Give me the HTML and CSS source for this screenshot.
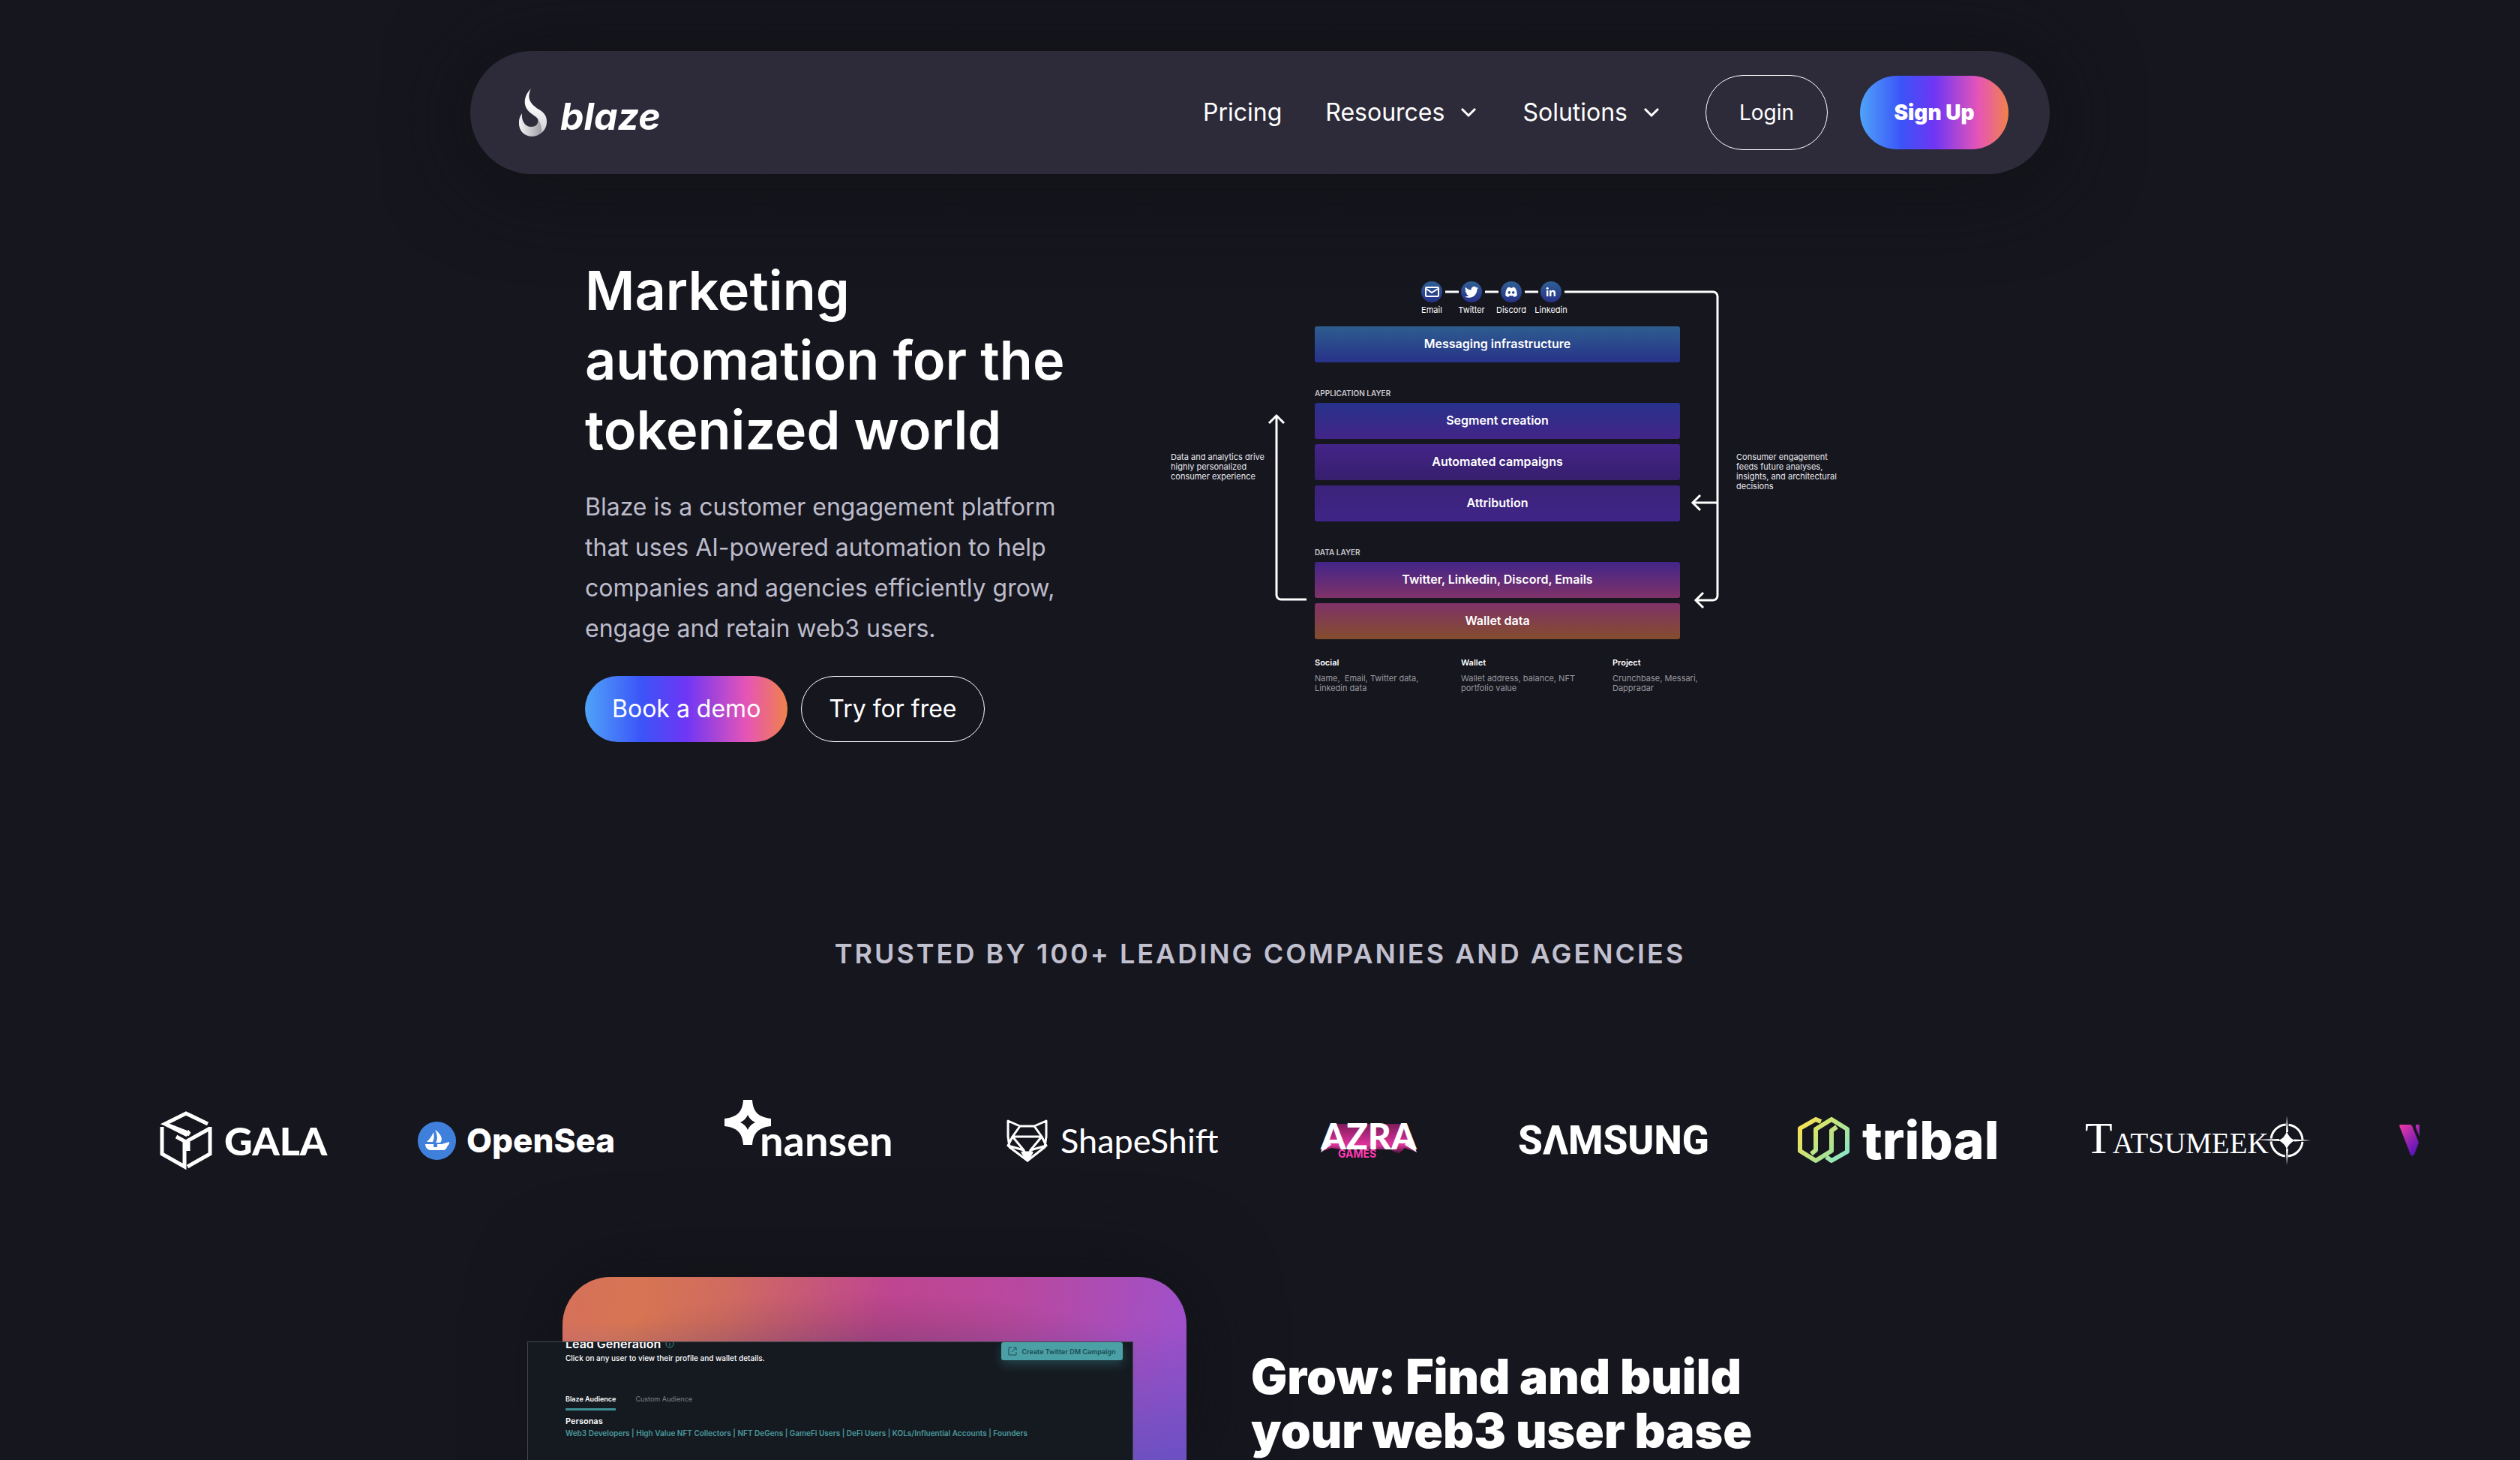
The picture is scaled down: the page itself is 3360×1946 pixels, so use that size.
FILE: index.html
```html
<!DOCTYPE html>
<html lang="en">
<head>
<meta charset="utf-8">
<meta name="viewport" content="width=device-width, initial-scale=1">
<title>Blaze – Marketing automation for the tokenized world</title>
<link rel="stylesheet" href="styles.css">
</head>
<body>
<header class="header">
  <a class="brand" href="#" aria-label="Blaze home">
    <svg class="brand-mark" viewBox="0 0 37 64" aria-hidden="true">
      <defs>
        <linearGradient id="flame" x1="0" y1="0" x2="0" y2="1"><stop offset="0.4" stop-color="#fafafa"/><stop offset="1" stop-color="#cfced4"/></linearGradient>
        <linearGradient id="bowl" x1="0" y1="0" x2="1" y2="0"><stop offset="0" stop-color="#f4f4f6"/><stop offset="1" stop-color="#9b9aa3"/></linearGradient>
      </defs>
      <path fill="url(#bowl)" d="M4 33C-2 41-1 52 4 58C10 65 23 66 30 59L31 50L25 42C26 47 23 51 16 51C8 51 3 43 4 33Z"/>
      <path fill="url(#flame)" d="M16 0C6 10 6 21 11 28C16 35 25 37 26 43C29 47 31 52 30 59C35 55 37 50 37 44C37 35 32 31 25 27C15 20 10 13 16 0Z"/>
    </svg>
    <span class="brand-name">blaze</span>
  </a>
  <nav class="nav" aria-label="Main">
    <a class="nav-link" href="#">Pricing</a>
    <a class="nav-link" href="#">Resources
      <svg class="chevron" viewBox="0 0 24 16" aria-hidden="true"><path d="M3 3l9 9 9-9"/></svg></a>
    <a class="nav-link" href="#">Solutions
      <svg class="chevron" viewBox="0 0 24 16" aria-hidden="true"><path d="M3 3l9 9 9-9"/></svg></a>
    <button class="login" type="button">Login</button>
    <button class="signup gradient" type="button">Sign Up</button>
  </nav>
</header>

<main>
  <section class="hero">
    <div class="hero-copy">
      <h1>Marketing automation for the tokenized world</h1>
      <p class="lead">Blaze is a customer engagement platform that uses AI-powered automation to help companies and agencies efficiently grow, engage and retain web3 users.</p>
      <div class="actions">
        <button class="cta gradient" type="button">Book a demo</button>
        <button class="cta outline" type="button">Try for free</button>
      </div>
    </div>

    <figure class="diagram">
      <svg class="wires" viewBox="0 0 900 580" aria-hidden="true">
        <path d="M377 39h18M430 39h18M483 39h18M536 39h198a6 6 0 0 1 6 6V444a6 6 0 0 1-6 6H711M740 320H707"/>
        <path d="M721 440l-10 10 10 10M717 310l-10 10 10 10"/>
        <path d="M192 449H158a6 6 0 0 1-6-6V204M142 214l10-10 10 10"/>
      </svg>
      <p class="note note-left">Data and analytics drive highly personalized consumer experience</p>
      <div class="stack">
        <ul class="channels">
          <li><svg viewBox="0 0 28 28" aria-hidden="true"><defs><linearGradient id="disc" x1="0" y1="0" x2="0" y2="1"><stop offset="0" stop-color="#2f5f94"/><stop offset="1" stop-color="#273289"/></linearGradient></defs><circle cx="14" cy="14" r="14" fill="url(#disc)"/><rect x="6" y="8" width="17" height="12" rx="1" fill="none" stroke="#fff" stroke-width="2"/><path d="M7 10l7 5 8-5" fill="none" stroke="#fff" stroke-width="2"/></svg>Email</li>
          <li><svg viewBox="0 0 28 28" aria-hidden="true"><circle cx="14" cy="14" r="14" fill="url(#disc)"/><path fill="#fff" transform="translate(5 5) scale(.76)" d="M23.6 4.9c-.9.4-1.8.7-2.8.8 1-.6 1.8-1.6 2.2-2.7-1 .6-2 1-3.1 1.2A4.9 4.9 0 0 0 11.5 8.7C7.5 8.5 3.9 6.5 1.5 3.6c-1.300 2.200-.7 5.100 1.500 6.600-.8 0-1.600-.2-2.200-.6 0 2.300 1.600 4.400 3.900 4.900-.7.2-1.500.2-2.200.1.6 2 2.400 3.400 4.600 3.400A9.900 9.900 0 0 1 0 20a13.900 13.900 0 0 0 7.500 2.200c9.100 0 14.300-7.700 14-14.600 1-.7 1.800-1.600 2.100-2.700z"/></svg>Twitter</li>
          <li><svg viewBox="0 0 28 28" aria-hidden="true"><circle cx="14" cy="14" r="14" fill="url(#disc)"/><path fill="#fff" fill-rule="evenodd" d="M9 8.500l3-1 .7 1.200h2.600L16 7.500l3 1c2 3 3 6 2.700 10.500-1.200 1-2.500 1.600-4 2l-1-1.700h-5.400l-1 1.700c-1.500-.4-2.800-1-4-2C6 14.500 7 11.500 9 8.500zM11.300 13a1.700 1.900 0 1 0 .01 0zM16.700 13a1.700 1.900 0 1 0 .01 0z"/></svg>Discord</li>
          <li><svg viewBox="0 0 28 28" aria-hidden="true"><circle cx="14" cy="14" r="14" fill="url(#disc)"/><path fill="#fff" d="M8 12h2.400v8H8zM12 12h2.300v1.200c1.400-2.200 5.700-1.800 5.700 1.800v5h-2.400v-4.500c0-2.200-3.100-2-3.100 0V20H12z"/><circle cx="9.200" cy="9.200" r="1.500" fill="#fff"/></svg>Linkedin</li>
        </ul>
        <div class="bar bar-messaging">Messaging infrastructure</div>
        <h2 class="layer">APPLICATION LAYER</h2>
        <div class="bars">
          <div class="bar bar-segment">Segment creation</div>
          <div class="bar bar-campaigns">Automated campaigns</div>
          <div class="bar bar-attribution">Attribution</div>
        </div>
        <h2 class="layer">DATA LAYER</h2>
        <div class="bars">
          <div class="bar bar-social">Twitter, Linkedin, Discord, Emails</div>
          <div class="bar bar-wallet">Wallet data</div>
        </div>
        <dl class="sources">
          <div><dt>Social</dt><dd>Name,&nbsp; Email, Twitter data,<br>Linkedin data</dd></div>
          <div><dt>Wallet</dt><dd>Wallet address, balance, NFT<br>portfolio value</dd></div>
          <div><dt>Project</dt><dd>Crunchbase, Messari,<br>Dappradar</dd></div>
        </dl>
      </div>
      <p class="note note-right">Consumer engagement feeds future analyses, insights, and architectural decisions</p>
    </figure>
  </section>

  <section class="trusted">
    <h2 class="trusted-title">TRUSTED BY 100+ LEADING COMPANIES AND AGENCIES</h2>
    <ul class="logos">
      <li class="logo gala">
        <svg width="70" height="78" viewBox="0 0 70 78" fill="none" stroke="#fff" stroke-width="5" aria-hidden="true"><path d="M40 31L35 28 7 17 35 3 64 17M40 27L35 31 7 17M3 21v36l30 17V40L22 34M67 21v36L37 74M67 23L38 39v14"/></svg>
        <span>GALA</span></li>
      <li class="logo opensea">
        <svg width="51" height="51" viewBox="0 0 51 51" aria-hidden="true"><circle cx="25.500" cy="25.500" r="25.500" fill="#3f80dc"/><path fill="#fff" d="M23 11l3 2c5 5 8 10 4 15h-6c3-5 2-11-1-17zM21 14c1 5 1 9-1 13h-8c4-4 7-8 9-13zM10 30h11v4h5v-4h6l10-3v3c-3 1-3 8-8 8H17c-4 0-7-4-7-8z"/></svg>
        <span>OpenSea</span></li>
      <li class="logo nansen">
        <svg width="62" height="60" viewBox="0 0 62 60" aria-hidden="true"><path fill="#fff" fill-rule="evenodd" d="M25 0H37C38 15 44 23 62 25V35C44 37 38 45 37 60H25C24 45 18 37 0 35V25C18 23 24 15 25 0ZM31 20Q28 27 21 30Q28 33 31 40Q34 33 41 30Q34 27 31 20Z"/></svg>
        <span>nansen</span></li>
      <li class="logo shapeshift">
        <svg width="55" height="59" viewBox="0 0 55 59" fill="none" stroke="#fff" stroke-width="3" stroke-linejoin="round" aria-hidden="true"><path d="M2 3L18 10H37L53 3V24L51 38 28 56 4 38 2 24ZM18 10L8 24H47L37 10M8 24L2 36 23 42 8 24M47 24L53 36 32 42 47 24M23 42L28 56 32 42"/><path fill="#fff" d="M21 45h13l-6 11z"/></svg>
        <span>ShapeShift</span></li>
      <li class="logo azra">
        <svg class="azra-glow" width="128" height="46" viewBox="0 0 128 46" aria-hidden="true"><defs><linearGradient id="glow" x1="0" y1="0" x2="0" y2="1"><stop offset="0" stop-color="#7d1c5c"/><stop offset="0.700" stop-color="#e0329c"/><stop offset="1" stop-color="#3c1332"/></linearGradient></defs><path fill="url(#glow)" d="M14 2H112L128 40 112 34 104 42 92 36H26L14 34 0 40Z"/><path fill="#f4eef3" d="M0 40L8 18 14 30ZM128 40L120 18 112 30Z"/></svg>
        <span class="azra-name">AZRA</span><span class="azra-sub">GAMES</span></li>
      <li class="logo samsung"><span>SΛMSUNG</span></li>
      <li class="logo tribal">
        <svg width="69" height="62" viewBox="0 0 69 62" fill="none" stroke-width="6" stroke-linejoin="round" aria-hidden="true"><defs><linearGradient id="leafA" x1="0" y1="0" x2="1" y2="1"><stop offset="0" stop-color="#ffe24d"/><stop offset="1" stop-color="#93e2a3"/></linearGradient><linearGradient id="leafB" x1="0" y1="0" x2="1" y2="1"><stop offset="0" stop-color="#e6e552"/><stop offset="1" stop-color="#83e5cd"/></linearGradient></defs><path stroke="url(#leafA)" d="M31 6L24 3 3 15V45L24 58 45 45V18L52 13"/><path stroke="url(#leafB)" d="M18 49L24 44V16L45 3 66 16V46L45 58 38 53"/></svg>
        <span>tribal</span></li>
      <li class="logo tatsumeeko">
        <span><span class="cap">T</span>ATSUMEEK</span>
        <svg width="76" height="66" viewBox="0 0 76 66" aria-hidden="true"><circle cx="44" cy="33" r="21" fill="none" stroke="#fff" stroke-width="3" stroke-dasharray="29 4" stroke-dashoffset="-2"/><path fill="#fff" d="M44 0l2 22h-3zM44 66l2-22h-3zM76 33l-22 1.500v-3zM0 32l34-1v3zM44 21q3 9 11 12q-8 3-11 12q-3-9-11-12q8-3 11-12z"/></svg></li>
      <li class="logo vee">
        <svg width="27" height="42" viewBox="0 0 27 42" aria-hidden="true"><defs><linearGradient id="vee" x1="0" y1="0" x2="0.600" y2="1"><stop offset="0" stop-color="#ee3aa5"/><stop offset="1" stop-color="#5a14b8"/></linearGradient></defs><path fill="url(#vee)" d="M2 0H14Q17 0 18 4L26 24 20 40Q17 43 15 40L1 4Q-1 0 2 0ZM22 0H27V16L22 4Z"/></svg></li>
    </ul>
  </section>

  <section class="feature">
    <div class="feature-art">
      <div class="shot">
        <div class="shot-head">
          <div>
            <h3 class="shot-title">Lead Generation <svg width="12" height="12" viewBox="0 0 12 12" aria-hidden="true"><circle cx="6" cy="6" r="5" fill="none" stroke="#3f8f93" stroke-width="1"/><path d="M6 5v4" stroke="#3f8f93"/></svg></h3>
            <p class="shot-text">Click on any user to view their profile and wallet details.</p>
          </div>
          <button class="shot-button" type="button"><svg width="12" height="12" viewBox="0 0 12 12" fill="none" stroke="#1d4c54" aria-hidden="true"><path d="M5 1H1v10h10V7M7 1h4v4M11 1L5 7"/></svg>Create Twitter DM Campaign</button>
        </div>
        <div class="tabs"><a class="tab active" href="#">Blaze Audience</a><a class="tab" href="#">Custom Audience</a></div>
        <h4 class="personas-title">Personas</h4>
        <p class="personas">Web3 Developers | High Value NFT Collectors | NFT DeGens | GameFi Users | DeFi Users | KOLs/Influential Accounts | Founders</p>
      </div>
    </div>
    <h2 class="feature-title">Grow: Find and build your web3 user base</h2>
  </section>
</main>
</body>
</html>
```

FILE: styles.css
```css
* { box-sizing: border-box; }
html { background: #16161f; }
body {
  display: flex;
  flex-direction: column;
  margin: 0;
  min-height: 100vh;
  background: #16161f;
  color: #fff;
  font-family: Inter, "Liberation Sans", sans-serif;
}
main { display: flex; flex-direction: column; flex: 1; }
h1, h2, h3, h4, p, ul, dl, dd, figure { margin: 0; padding: 0; }
ul { list-style: none; }
a { color: inherit; text-decoration: none; }
button { font: inherit; color: inherit; border: 0; background: none; padding: 0; cursor: pointer; white-space: nowrap; }
svg { display: block; flex: none; }

.gradient { background: linear-gradient(90deg, #4fa3f9 0%, #3b54f8 28%, #6e36f5 50%, #e655b6 80%, #f0824a 100%); }

/* Header */
.header {
  display: flex;
  align-items: center;
  justify-content: space-between;
  width: 2106px;
  max-width: 100%;
  height: 164px;
  margin: 68px auto 0;
  padding: 0 55px 0 65px;
  border-radius: 82px;
  background: #2d2b3a;
  box-shadow: 0 8px 120px #101213;
}
.brand { display: flex; align-items: center; gap: 18px; }
.brand-mark { width: 37px; height: 64px; }
.brand-name { font: italic 700 50px/56px Inter, sans-serif; padding-top: 10px; }
.nav { display: flex; align-items: center; }
.nav-link { display: flex; align-items: center; gap: 20px; margin-right: 60px; font-size: 32px; line-height: 40px; }
.nav-link:first-child { margin-right: 58px; }
.chevron { width: 24px; height: 16px; fill: none; stroke: #fff; stroke-width: 3; }
.login { width: 163px; height: 100px; border: 1px solid #fff; border-radius: 50px; font-size: 28px; }
.signup { width: 198px; height: 98px; margin-left: 43px; border-radius: 49px; font-size: 28px; font-weight: 900; }

/* Hero */
.hero { display: flex; width: 1800px; max-width: 100%; margin: 108px auto 0; }
.hero-copy { flex: none; width: 770px; }
h1 { width: 680px; font-size: 72px; line-height: 93px; font-weight: 600; }
.lead { width: 680px; margin-top: 30px; font-size: 32px; line-height: 54px; color: #bdbccb; }
.actions { display: flex; gap: 18px; margin-top: 36px; }
.cta { height: 88px; padding: 0 36px 2px; border-radius: 44px; font-size: 32px; }
.outline { border: 1px solid #fff; }

/* Layer diagram */
.diagram { position: relative; display: grid; grid-template-columns: 203px 487px 210px; height: 580px; margin-top: 10px; }
.wires { position: absolute; left: 0; top: 0; width: 900px; height: 580px; fill: none; stroke: #fff; stroke-width: 3; }
.note { font-size: 11px; line-height: 13px; color: #e8e8ec; }
.note-left { width: 130px; margin: 253px 0 0 11px; }
.note-right { width: 140px; margin: 253px 0 0 75px; }
.stack { display: flex; flex-direction: column; padding-top: 25px; }
.channels { display: flex; justify-content: center; padding-right: 16px; font-size: 11px; line-height: 14px; }
.channels li { display: flex; flex-direction: column; align-items: center; gap: 3px; width: 53px; }
.channels svg { width: 28px; height: 28px; }
.bars { display: grid; gap: 7px; }
.bar { display: grid; place-items: center; height: 48px; padding-bottom: 2px; border-radius: 3px; font-size: 16px; font-weight: 600; }
.bar-messaging { margin-top: 15px; background: linear-gradient(#2e5d8f, #273289); }
.bar-segment { background: linear-gradient(#27328a, #432488); }
.bar-campaigns { background: linear-gradient(#432488, #371f6d); }
.bar-attribution { background: linear-gradient(#3b2279, #402588); }
.bar-social { background: linear-gradient(#422589, #7f3268); }
.bar-wallet { background: linear-gradient(#7f3268, #844d2c); }
.layer { padding-top: 35px; height: 54px; font-size: 10px; line-height: 12px; font-weight: 600; color: #c8c8cc; }
.sources { display: grid; grid-template-columns: 195px 202px 130px; margin-top: 25px; font-size: 11px; line-height: 13px; white-space: nowrap; }
.sources dt { font-weight: 600; margin-bottom: 8px; }
.sources dd { color: #98989e; }

/* Customer logos */
.trusted { margin-top: 260px; padding: 0 134px; }
.trusted-title { text-align: center; font-size: 36px; line-height: 44px; font-weight: 600; letter-spacing: 3px; color: #c1c0cf; }
.logos { display: flex; align-items: center; height: 120px; margin-top: 167px; padding-left: 79px; overflow: hidden; white-space: nowrap; }
.logo { display: flex; align-items: center; flex: none; }
.gala { width: 344px; gap: 16px; font: 900 52px/60px Lato, sans-serif; }
.opensea { width: 409px; gap: 14px; font: 800 44px/52px Inter, sans-serif; }
.nansen { width: 376px; font: 700 56px/60px Lato, sans-serif; }
.nansen svg { margin: -48px -15px 0 0; }
.shapeshift { width: 419px; gap: 17px; font: 400 45px/52px Lato, sans-serif; }
.azra { position: relative; width: 263px; flex-direction: column; align-items: flex-start; }
.azra-glow { position: absolute; left: 0; top: 0; }
.azra-name { position: relative; font: 900 48px/36px Lato, sans-serif; }
.azra-sub { position: relative; margin-left: 23px; font: 700 14px/12px Inter, sans-serif; color: #ff3ab2; }
.samsung { width: 373px; font: 800 53px/60px Roboto, sans-serif; }
.tribal { width: 383px; gap: 17px; font: 800 70px/76px Inter, sans-serif; }
.tatsumeeko { width: 419px; font: 400 39px/60px "Liberation Serif", serif; }
.tatsumeeko .cap { font-size: 60px; }
.tatsumeeko svg { margin-left: -20px; }

/* Feature */
.feature { display: flex; flex: 1; width: 1860px; max-width: 100%; margin: 122px auto 0; gap: 86px; }
.feature-art {
  display: flex;
  flex: none;
  width: 832px;
  padding-top: 86px;
  border-radius: 64px 64px 0 0;
  background:
    radial-gradient(ellipse 380px 90px at 48% 110px, rgba(60, 45, 60, 0.300), transparent),
    linear-gradient(180deg, transparent 60px, rgba(80, 80, 190, 0.700) 260px),
    linear-gradient(100deg, #d6705c 0%, #d67552 12%, #cf6a60 26%, #bf4590 50%, #b8489f 70%, #a050c8 95%, #9c50cc 100%);
  box-shadow: 0 0 120px #111315;
}
.shot { flex: none; width: 808px; margin-left: -47px; padding: 0 13px 0 50px; border: 1px solid rgba(255, 255, 255, 0.200); border-bottom: 0; background: #151a21; overflow: hidden; }
.shot-head { display: flex; justify-content: space-between; align-items: flex-start; }
.shot-title { display: flex; align-items: center; gap: 6px; margin-top: -8px; font-size: 16px; line-height: 20px; font-weight: 600; }
.shot-text { margin-top: 3px; font-size: 10px; line-height: 13px; font-weight: 500; }
.shot-button { display: flex; align-items: center; justify-content: center; gap: 6px; width: 162px; height: 24px; border-radius: 3px; background: #4aa0a5; color: #1d4c54; font-size: 9px; font-weight: 600; box-shadow: 0 6px 14px rgba(74, 160, 165, 0.300); }
.tabs { display: flex; gap: 26px; margin-top: 42px; font-size: 9px; line-height: 12px; color: #7d8288; }
.tab { padding-bottom: 6px; border-bottom: 3px solid transparent; }
.active { color: #fff; font-weight: 600; border-color: #3f9095; }
.personas-title { margin-top: 7px; font-size: 11px; line-height: 14px; font-weight: 600; }
.personas { margin-top: 2px; font-size: 10px; line-height: 14px; font-weight: 600; color: #4a989c; white-space: nowrap; }
.feature-title { width: 720px; margin-top: 97px; font-size: 64px; line-height: 72px; font-weight: 900; }
```
